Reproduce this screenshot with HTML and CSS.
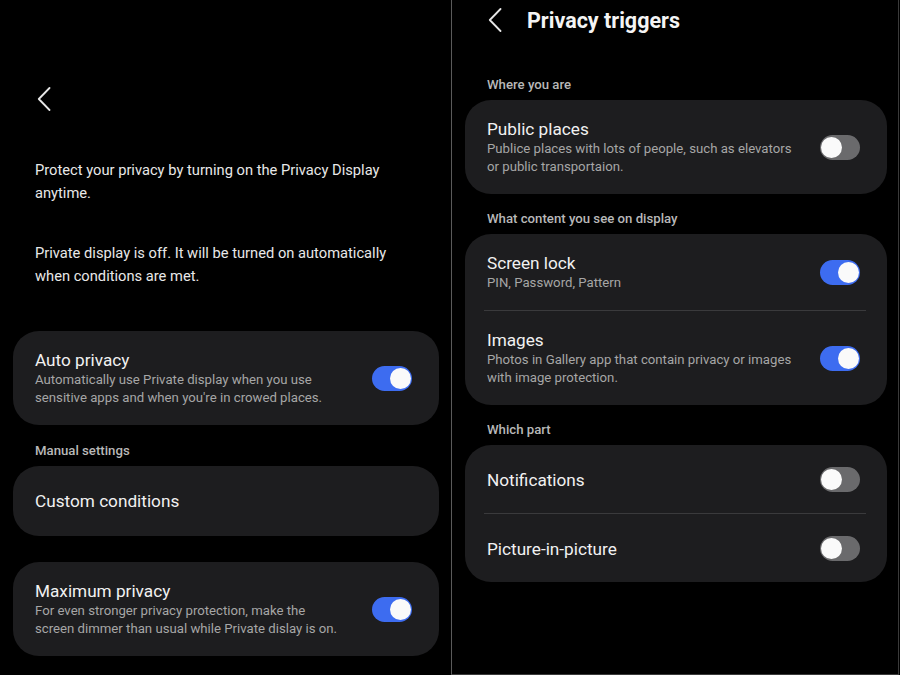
FILE: index.html
```html
<!DOCTYPE html>
<html lang="en">
<head>
    <meta charset="UTF-8">
    <meta name="viewport" content="width=device-width, initial-scale=1.0">
    <title>Privacy Display</title>
    <link rel="stylesheet" href="styles.css">
</head>
<body>
    <div class="screens">
        <!-- Privacy display screen -->
        <div class="screen screen-left">
            <div class="back back-big">
                <svg width="14" height="24" viewBox="0 0 14 24"><path d="M12.5 1 L1.8 12 L12.5 23" fill="none" stroke="#e6e6e6" stroke-width="1.8" stroke-linecap="round" stroke-linejoin="round"/></svg>
            </div>
            <p class="intro intro-first">Protect your privacy by turning on the Privacy Display anytime.</p>
            <p class="intro">Private display is off. It will be turned on automatically when conditions are met.</p>

            <div class="card card-first">
                <div class="row">
                    <div class="row-text">
                        <div class="row-title">Auto privacy</div>
                        <div class="row-sub">Automatically use Private display when you use<br>sensitive apps and when you're in crowed places.</div>
                    </div>
                    <span class="switch on"></span>
                </div>
            </div>

            <div class="section-label label-left">Manual settings</div>
            <div class="card">
                <div class="row row-single">
                    <div class="row-title">Custom conditions</div>
                </div>
            </div>

            <div class="card card-gap">
                <div class="row">
                    <div class="row-text">
                        <div class="row-title">Maximum privacy</div>
                        <div class="row-sub">For even stronger privacy protection, make the<br>screen dimmer than usual while Private dislay is on.</div>
                    </div>
                    <span class="switch on"></span>
                </div>
            </div>
        </div>

        <!-- Privacy triggers screen -->
        <div class="screen screen-right">
            <div class="header">
                <div class="back">
                    <svg width="14" height="24" viewBox="0 0 14 24"><path d="M12.5 1 L1.8 12 L12.5 23" fill="none" stroke="#e6e6e6" stroke-width="1.8" stroke-linecap="round" stroke-linejoin="round"/></svg>
                </div>
                <h1>Privacy triggers</h1>
            </div>

            <div class="section-label label-first">Where you are</div>
            <div class="card">
                <div class="row">
                    <div class="row-text">
                        <div class="row-title">Public places</div>
                        <div class="row-sub">Publice places with lots of people, such as elevators<br>or public transportaion.</div>
                    </div>
                    <span class="switch"></span>
                </div>
            </div>

            <div class="section-label">What content you see on display</div>
            <div class="card">
                <div class="row">
                    <div class="row-text">
                        <div class="row-title">Screen lock</div>
                        <div class="row-sub">PIN, Password, Pattern</div>
                    </div>
                    <span class="switch on"></span>
                </div>
                <div class="divider"></div>
                <div class="row">
                    <div class="row-text">
                        <div class="row-title">Images</div>
                        <div class="row-sub">Photos in Gallery app that contain privacy or images<br>with image protection.</div>
                    </div>
                    <span class="switch on"></span>
                </div>
            </div>

            <div class="section-label">Which part</div>
            <div class="card">
                <div class="row row-short">
                    <div class="row-title">Notifications</div>
                    <span class="switch"></span>
                </div>
                <div class="divider"></div>
                <div class="row row-short">
                    <div class="row-title">Picture-in-picture</div>
                    <span class="switch"></span>
                </div>
            </div>
        </div>
    </div>
</body>
</html>
```

FILE: styles.css
```css
body {
    margin: 0;
    background-color: #000;
    font-family: Roboto, "Noto Sans", Arial, sans-serif;
    color: #f1f1f1;
}
.screens {
    display: flex;
    width: 900px;
    height: 675px;
    overflow: hidden;
}
.screen {
    box-sizing: border-box;
    height: 675px;
}
.screen-left {
    width: 451px;
    padding: 0 12px 0 13px;
}
.screen-right {
    width: 448px;
    padding: 0 11px 0 13px;
    border-left: 1px solid #5a5a5a;
    border-right: 1px solid #3a3a3a;
    border-bottom: 1px solid #3a3a3a;
}
.back {
    display: flex;
    align-items: center;
    height: 24px;
}
.back-big {
    margin-top: 87px;
    padding-left: 24px;
}
.intro {
    margin: 0;
    padding: 0 40px 0 22px;
    font-size: 14.7px;
    line-height: 23px;
    color: #e8e8e8;
}
.intro-first {
    margin-top: 48px;
    margin-bottom: 37px;
}
.header {
    display: flex;
    align-items: center;
    height: 40px;
    padding-left: 23px;
}
.header h1 {
    margin: 0 0 0 25px;
    font-size: 21.5px;
    font-weight: 700;
    color: #f4f4f4;
}
.section-label {
    padding: 17px 0 7px 22px;
    font-size: 13.2px;
    line-height: 16px;
    font-weight: 500;
    color: #b8b8b8;
}
.label-first {
    padding-top: 37px;
}
.label-left {
    padding-top: 18px;
}
.card {
    background-color: #1d1d1f;
    border-radius: 26px;
}
.card-first {
    margin-top: 43px;
}
.card-gap {
    margin-top: 26px;
}
.row {
    display: flex;
    align-items: center;
    justify-content: space-between;
    padding: 18px 27px 18px 22px;
}
.row-single {
    padding-top: 24px;
    padding-bottom: 24px;
}
.row-short {
    padding-top: 22px;
    padding-bottom: 21px;
}
.row-title {
    font-size: 17.2px;
    line-height: 22px;
    color: #f1f1f1;
}
.row-sub {
    font-size: 13.2px;
    line-height: 18px;
    color: #a6a6a6;
}
.divider {
    height: 1px;
    margin: 0 21px 0 19px;
    background-color: #3a3a3c;
}
.switch {
    position: relative;
    flex-shrink: 0;
    width: 40px;
    height: 25px;
    border-radius: 13px;
    background-color: #6a6a6c;
}
.switch::after {
    content: "";
    position: absolute;
    top: 2px;
    left: 1px;
    width: 21px;
    height: 21px;
    border-radius: 50%;
    background-color: #fafafa;
}
.switch.on {
    background-color: #3d6cf0;
}
.switch.on::after {
    left: 18px;
}
```
